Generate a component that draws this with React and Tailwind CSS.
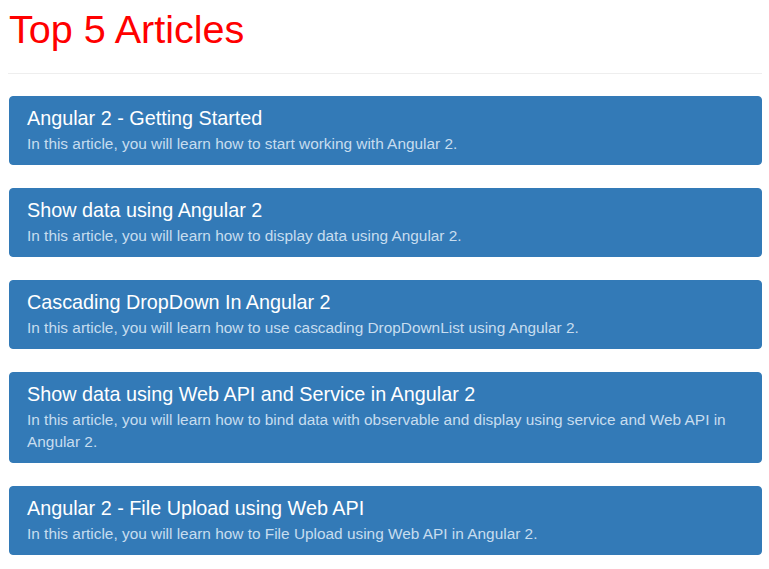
import React from "react";

const articles = [
  {
    title: "Angular 2 - Getting Started",
    text: "In this article, you will learn how to start working with Angular 2.",
  },
  {
    title: "Show data using Angular 2",
    text: "In this article, you will learn how to display data using Angular 2.",
  },
  {
    title: "Cascading DropDown In Angular 2",
    text: "In this article, you will learn how to use cascading DropDownList using Angular 2.",
  },
  {
    title: "Show data using Web API and Service in Angular 2",
    text: "In this article, you will learn how to bind data with observable and display using service and Web API in Angular 2.",
  },
  {
    title: "Angular 2 - File Upload using Web API",
    text: "In this article, you will learn how to File Upload using Web API in Angular 2.",
  },
];

const App = () => {
  return (
    <div
      className="min-h-screen bg-white"
      style={{ fontFamily: '"Liberation Sans", Arial, Helvetica, sans-serif' }}
    >
      <div className="ml-[9px] w-[753px]">
        {/* Page header */}
        <div className="pt-[8px] pb-[21px] border-b border-[#eeeeee] -ml-[1px]">
          <h1 className="text-[39.6px] leading-[43.6px] text-[#ff0000] font-normal ml-[1px]">
            Top 5 Articles
          </h1>
        </div>

        {/* Article list */}
        <div className="mt-[22px] flex flex-col gap-[23px]">
          {articles.map((a, i) => (
            <div
              key={i}
              className="rounded-[4px] border border-[#337ab7] bg-[#337ab7] pt-[10px] pb-[9px] pl-[17px] pr-[16px]"
            >
              <h4 className="text-[19.8px] leading-[22px] text-white font-normal mb-[4px]">
                {a.title}
              </h4>
              <p className="text-[15.4px] leading-[22px] text-[#c7ddef]">
                {a.text}
              </p>
            </div>
          ))}
        </div>
      </div>
    </div>
  );
};

export default App;
